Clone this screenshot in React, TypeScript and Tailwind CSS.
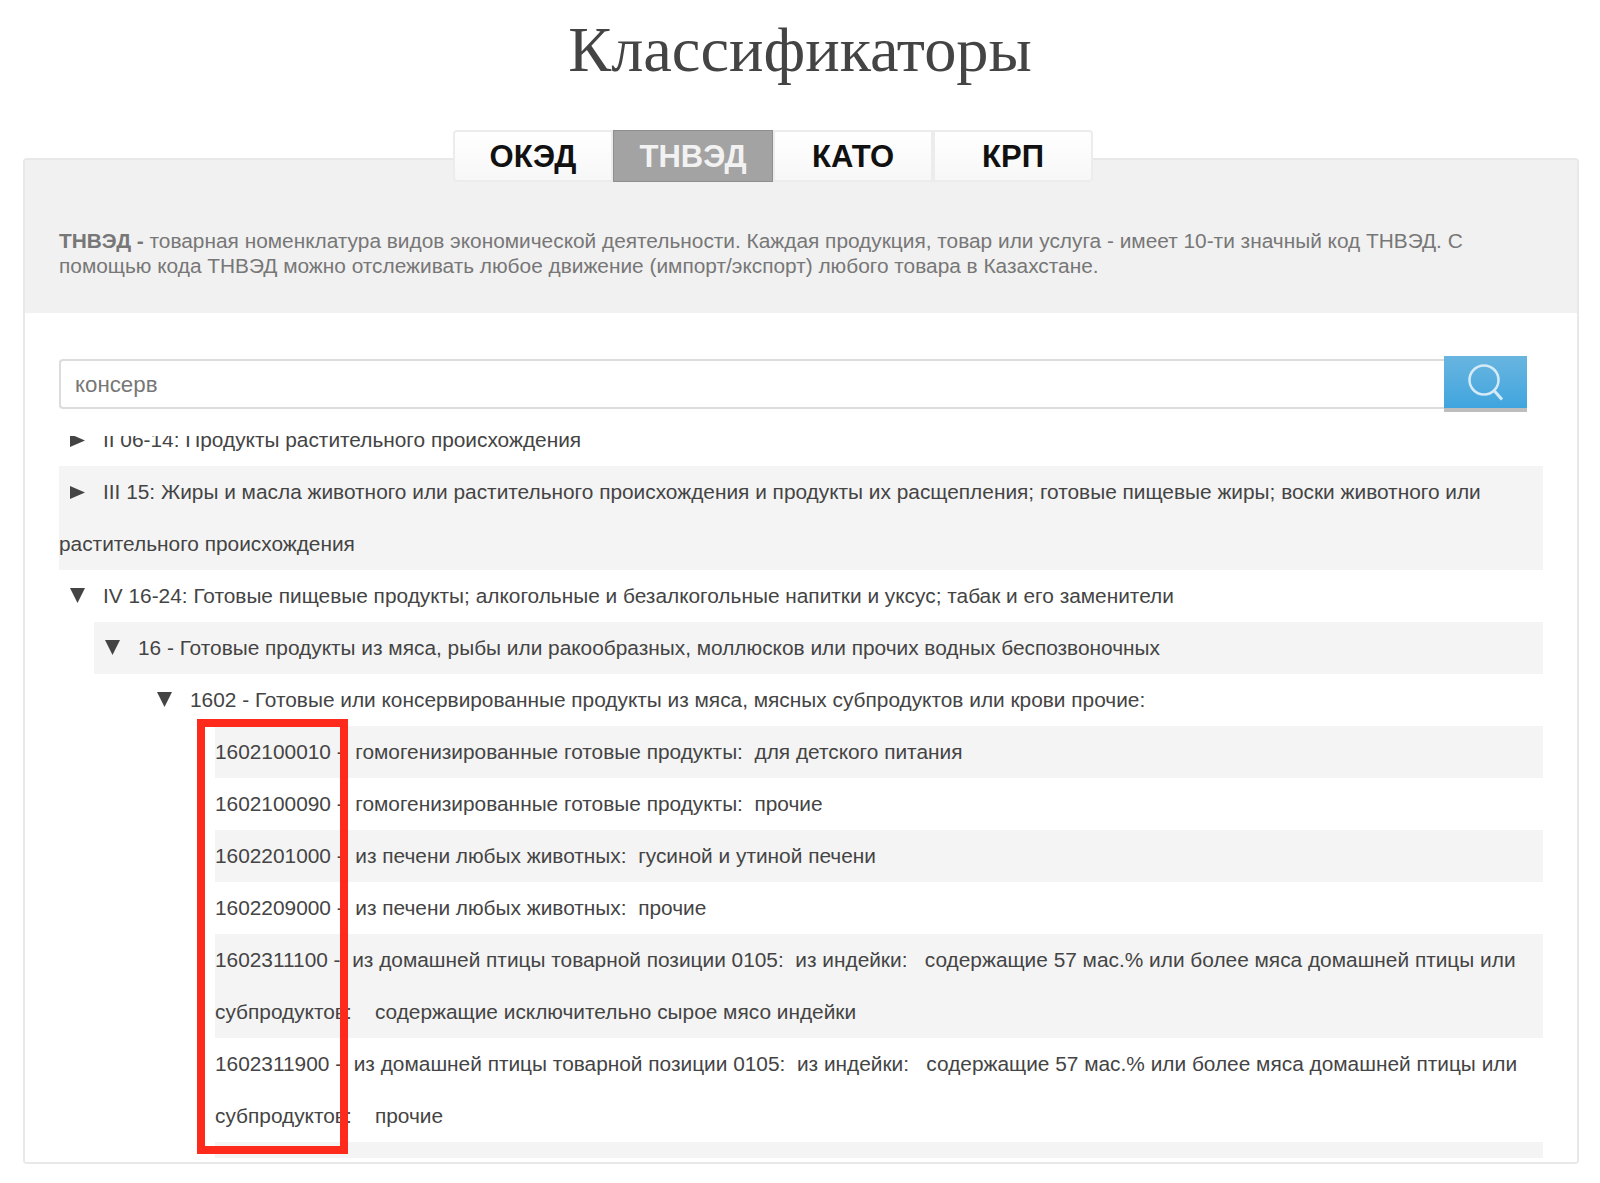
const down = "M0 0H15L7.5 15Z";
const right = "M0 0L15 6.5L0 13Z";

function Arrow({ open }: { open?: boolean }) {
  return (
    <svg
      width="15"
      height={open ? 15 : 13}
      viewBox={open ? "0 0 15 15" : "0 0 15 13"}
      className="inline-block ml-[11px] mr-[18px] align-[0px]"
    >
      <path d={open ? down : right} fill="#444444" />
    </svg>
  );
}

const tabs = ["ОКЭД", "ТНВЭД", "КАТО", "КРП"];

const codes: [string, string, boolean][] = [
  ["1602100010", "\u00a0 гомогенизированные готовые продукты: \u00a0для детского питания", true],
  ["1602100090", "\u00a0 гомогенизированные готовые продукты: \u00a0прочие", false],
  ["1602201000", "\u00a0 из печени любых животных: \u00a0гусиной и утиной печени", true],
  ["1602209000", "\u00a0 из печени любых животных: \u00a0прочие", false],
  ["1602311100", "\u00a0 из домашней птицы товарной позиции 0105: \u00a0из индейки: \u00a0 содержащие 57 мас.% или более мяса домашней птицы или субпродуктов: \u00a0 \u00a0содержащие исключительно сырое мясо индейки", true],
  ["1602311900", "\u00a0 из домашней птицы товарной позиции 0105: \u00a0из индейки: \u00a0 содержащие 57 мас.% или более мяса домашней птицы или субпродуктов: \u00a0 \u00a0прочие", false],
  ["1602319000", "", true],
];

export default function App() {
  return (
    <div className="h-[1183px] bg-white font-['Liberation_Sans',sans-serif] text-[20.85px] text-[#444444] overflow-hidden">
      <h1 className="h-[130px] pt-[12px] text-center font-['Liberation_Serif',serif] text-[64.4px] leading-[76px] text-[#444444]">
        Классификаторы
      </h1>

      <div className="relative z-10 ml-[453px] flex w-[640px] h-[52px]">
        {tabs.map((t, i) =>
          t === "ТНВЭД" ? (
            <div
              key={t}
              className="w-[160px] flex items-center justify-center pt-[3px] border border-[#8f8f8f] bg-[#a3a3a3] text-[31px] font-bold text-[#f2f2f2]"
            >
              {t}
            </div>
          ) : (
            <div
              key={t}
              className={
                i === 0
                  ? "w-[160px] flex items-center justify-center pt-[3px] rounded-l-[4px] border-2 border-[#ececec] bg-gradient-to-b from-white to-[#f7f7f7] text-[31px] font-bold text-[#111111]"
                  : i === 3
                  ? "w-[160px] flex items-center justify-center pt-[3px] rounded-r-[4px] border-2 border-[#ececec] bg-gradient-to-b from-white to-[#f7f7f7] text-[31px] font-bold text-[#111111]"
                  : "w-[160px] flex items-center justify-center pt-[3px] border-2 border-[#ececec] bg-gradient-to-b from-white to-[#f7f7f7] text-[31px] font-bold text-[#111111]"
              }
            >
              {t}
            </div>
          )
        )}
      </div>

      <div className="-mt-[24px] ml-[23px] mr-[21px] rounded-[4px] border-2 border-[#e8e8e8]">
        <div className="h-[153px] bg-[#f1f1f1] pl-[34px] pr-[60px] pt-[69px] text-[20.85px] leading-[24.5px] text-[#777777]">
          <b className="font-bold">ТНВЭД - </b>
          товарная номенклатура видов экономической деятельности. Каждая продукция, товар или услуга - имеет 10-ти значный код ТНВЭД. С помощью кода ТНВЭД можно отслеживать любое движение (импорт/экспорт) любого товара в Казахстане.
        </div>

        <div className="bg-white pl-[34px] pr-[34px] pb-[4px] pt-[43px]">
          <div className="flex items-start h-[56px] pr-[16px]">
            <div className="mt-[3px] flex-1 h-[50px] rounded-l-[4px] border-2 border-r-0 border-[#dcdcdc] pl-[14px] leading-[47px] text-[22.3px] text-[#777777]">
              консерв
            </div>
            <div className="w-[83px] h-[56px] flex items-start justify-center bg-gradient-to-b from-[#68b5e0] to-[#3fa5de] border-b-[4px] border-[#bdbdbd] pt-[6px]">
              <svg width="40" height="40" viewBox="0 0 40 40" fill="none" stroke="#d4ebf7" strokeWidth="2.5">
                <circle cx="18" cy="18" r="14.5" />
                <path d="M28 28.5L36 37.5" strokeWidth="3" />
              </svg>
            </div>
          </div>

          <div className="relative mt-[24px] h-[722px] overflow-hidden">
            <div className="-mt-[22px] leading-[52px]">
              <div>
                <Arrow />II 06-14: Продукты растительного происхождения
              </div>
              <div className="bg-[#f4f4f4]">
                <Arrow />III 15: Жиры и масла животного или растительного происхождения и продукты их расщепления; готовые пищевые жиры; воски животного или растительного происхождения
              </div>
              <div>
                <Arrow open />IV 16-24: Готовые пищевые продукты; алкогольные и безалкогольные напитки и уксус; табак и его заменители
              </div>
              <div className="ml-[35px] bg-[#f4f4f4]">
                <Arrow open />16 - Готовые продукты из мяса, рыбы или ракообразных, моллюсков или прочих водных беспозвоночных
              </div>
              <div className="ml-[87px]">
                <Arrow open />1602 - Готовые или консервированные продукты из мяса, мясных субпродуктов или крови прочие:
              </div>
              <div className="ml-[156px]">
                {codes.map(([code, text, gray]) => (
                  <div key={code} className={gray ? "bg-[#f4f4f4]" : "bg-white"}>
                    {code} -{text}
                  </div>
                ))}
              </div>
            </div>
            <div className="absolute left-[138px] top-[283px] w-[151px] h-[435px] border-[8px] border-[#fe2a1c]" />
          </div>
        </div>
      </div>
    </div>
  );
}
